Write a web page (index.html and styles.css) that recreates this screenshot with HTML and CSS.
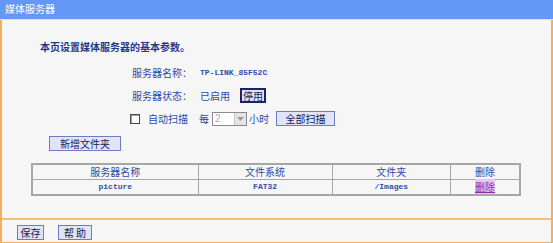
FILE: index.html
```html
<!DOCTYPE html>
<html lang="zh-CN">
<head>
<meta charset="utf-8">
<title>媒体服务器</title>
<link rel="stylesheet" href="styles.css">
</head>
<body>
<div class="title">媒体服务器</div>
<div class="panel">
  <div class="content">
    <p class="intro">本页设置媒体服务器的基本参数。</p>
    <div class="form">
      <div class="row"><span class="label">服务器名称：</span><span class="mono">TP-LINK_85F52C</span></div>
      <div class="row"><span class="label">服务器状态：</span><span>已启用</span><button class="btn btn-stop">停用</button></div>
      <div class="row row-scan">
        <span class="checkbox"></span>
        <span class="scan-label">自动扫描</span>
        <span class="every">每</span>
        <span class="select"><span class="select-val">2</span><span class="select-arrow"><svg width="7" height="4" viewBox="0 0 7 4"><path d="M0 0h7L3.5 4z" fill="#9a9a9a"/></svg></span></span>
        <span class="hours">小时</span>
        <button class="btn btn-scan">全部扫描</button>
      </div>
    </div>
    <button class="btn btn-add">新增文件夹</button>
    <table class="folders">
      <thead>
        <tr><th class="c1">服务器名称</th><th class="c2">文件系统</th><th class="c3">文件夹</th><th class="c4">删除</th></tr>
      </thead>
      <tbody>
        <tr><td class="mono">picture</td><td class="mono">FAT32</td><td class="mono">/Images</td><td><a class="del" href="#">删除</a></td></tr>
      </tbody>
    </table>
  </div>
  <div class="footer">
    <button class="btn btn-save">保存</button>
    <button class="btn btn-help">帮 助</button>
  </div>
</div>
</body>
</html>
```

FILE: styles.css
```css
html, body {
  margin: 0;
  padding: 0;
  background: #ffffff;
}
body {
  width: 553px;
  height: 243px;
  overflow: hidden;
  font-family: "Noto Sans CJK SC", "DejaVu Sans", sans-serif;
  font-size: 10px;
  color: #2a4aa8;
}
.title {
  height: 19px;
  line-height: 18px;
  padding-left: 5px;
  background: #6497f6;
  color: #ffffff;
  font-size: 10px;
  border-bottom: 1px solid #d6e4ff;
}
.panel {
  width: 549px;
  background: #f6f6f6;
  border-left: 2px solid #f4ad5c;
  border-right: 2px solid #f4ad5c;
  border-bottom: 2px solid #f4ad5c;
}
.content {
  padding-top: 20px;
  padding-bottom: 22px;
}
.intro {
  margin: 0 0 0 38px;
  height: 14px;
  line-height: 14px;
  font-size: 10px;
  font-weight: bold;
  color: #1d3a8e;
}
.form {
  margin: 7px 0 0 128px;
}
.row {
  display: flex;
  align-items: center;
  height: 23px;
  padding-left: 2px;
}
.label {
  width: 68px;
}
.mono {
  font-family: "Liberation Mono", "DejaVu Sans Mono", monospace;
  font-size: 8px;
  font-weight: bold;
  color: #2f4ea6;
}
.btn {
  padding: 0;
  margin: 0;
  height: 15px;
  line-height: 13px;
  font-family: "Noto Sans CJK SC", "DejaVu Sans", sans-serif;
  font-size: 10px;
  color: #14205a;
  background: #e1e4f7;
  border: 1px solid #6c7cc0;
  text-align: center;
}
.btn-stop {
  width: 26px;
  margin-left: 10px;
  border: 2px solid #1b2364;
  line-height: 11px;
}
.row-scan {
  padding-left: 0;
}
.checkbox {
  width: 8px;
  height: 8px;
  border: 1px solid #4a4a4a;
  background: #ffffff;
  box-shadow: inset 1px 1px 0 #a0a0a0;
}
.scan-label {
  margin-left: 8px;
}
.every {
  margin-left: 11px;
}
.select {
  display: flex;
  margin-left: 3px;
  width: 33px;
  height: 12px;
  border: 1px solid #8a8a8a;
  background: #ffffff;
}
.select-val {
  flex: 1;
  padding-left: 2px;
  line-height: 12px;
  font-family: "Liberation Sans", sans-serif;
  font-size: 10px;
  color: #a8a8a8;
}
.select-arrow {
  display: flex;
  align-items: center;
  justify-content: center;
  width: 11px;
  background: #e4e4e4;
  border-left: 1px solid #c4c4c4;
}
.hours {
  margin-left: 2px;
}
.btn-scan {
  width: 59px;
  margin-left: 7px;
}
.btn-add {
  display: block;
  width: 72px;
  margin: 6px 0 0 47px;
}
.folders {
  margin: 12px 0 0 29px;
  width: 490px;
  border-collapse: collapse;
  border: 2px solid #a6a6a6;
}
.folders th, .folders td {
  height: 14px;
  padding: 0;
  border: 1px solid #a6a6a6;
  text-align: center;
  line-height: 14px;
}
.folders th {
  font-weight: normal;
  font-size: 10px;
  color: #2a4aa8;
}
.c1 { width: 167px; }
.c2 { width: 135px; }
.c3 { width: 119px; }
.c4 { width: 69px; }
.del {
  color: #8d2aa8;
  text-decoration: underline;
  background: #e6c6ee;
}
.footer {
  display: flex;
  gap: 14px;
  height: 15px;
  padding: 5px 0 2px 15px;
  border-top: 2px solid #f3c07e;
}
.btn-save {
  width: 27px;
}
.btn-help {
  width: 34px;
}
```
